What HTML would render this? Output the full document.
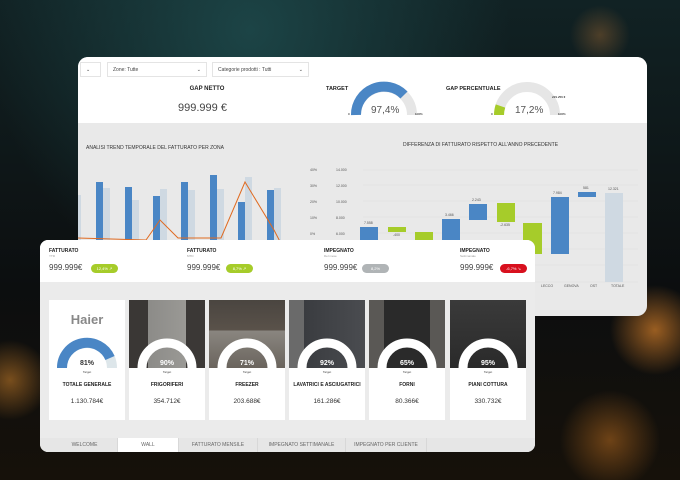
<!DOCTYPE html>
<html><head><meta charset="utf-8"><style>
*{margin:0;padding:0;box-sizing:border-box}
body{width:680px;height:480px;overflow:hidden;font-family:"Liberation Sans",sans-serif;position:relative;
background:radial-gradient(circle at 655px 330px,rgba(200,120,40,.75) 0,rgba(200,120,30,0) 45px),radial-gradient(circle at 610px 440px,rgba(170,100,30,.6) 0,rgba(200,120,30,0) 50px),radial-gradient(circle at 10px 380px,rgba(190,120,40,.6) 0,rgba(200,120,30,0) 40px),radial-gradient(circle at 600px 35px,rgba(150,100,50,.45) 0,rgba(0,0,0,0) 30px),radial-gradient(ellipse at 250px 30px,#1c4446 0,rgba(0,0,0,0) 260px),linear-gradient(#112224,#0c0e0f 60%,#16110a)}
.a{position:absolute}
.bp{left:78px;top:57px;width:569px;height:259px;border-radius:10px;background:#e9e9e9;overflow:hidden}
.top{left:0;top:0;width:569px;height:66px;background:#fff}
.dd{border:1px solid #e4e4e4;height:15px;font-size:5px;color:#444;padding:4px 5px;background:#fff}
.b{font-weight:bold;color:#222}
.fp{left:40px;top:240px;width:495px;height:212px;border-radius:8px;background:#ebebeb;overflow:hidden}
.card{top:60px;width:76px;height:120px;background:#fff}
.img{left:0;top:0;width:76px;height:68px}
.ct{width:76px;text-align:center;font-size:5px;font-weight:bold;color:#222;top:82px}
.cv{width:76px;text-align:center;font-size:6.5px;color:#333;top:98px}
.pc{width:76px;text-align:center;font-size:7px;font-weight:bold;color:#fff;top:60px}
.tg{width:76px;text-align:center;font-size:3px;color:#444;top:70px}
.tab{top:198px;height:14px;font-size:5px;color:#666;text-align:center;line-height:14px;border-right:1px solid #d8d8d8}
.badge{height:9px;border-radius:5px;font-size:4px;color:#fff;text-align:center;line-height:9px;width:27px}
</style></head><body>

<div class="a bp">
 <div class="a top"></div>
 <div class="a dd" style="left:2px;top:5px;width:21px">⌄</div>
 <div class="a dd" style="left:29px;top:5px;width:100px">Zone: Tutte<span style="float:right">⌄</span></div>
 <div class="a dd" style="left:134px;top:5px;width:97px">Categorie prodotti : Tutti<span style="float:right">⌄</span></div>
 <div class="a b" style="left:109px;top:29px;font-size:6px;width:40px;text-align:center">GAP NETTO</div>
 <div class="a" style="left:100px;top:45px;font-size:11px;color:#444">999.999 €</div>
 <div class="a b" style="left:248px;top:29px;font-size:5.5px">TARGET</div>
 <div class="a b" style="left:368px;top:29px;font-size:5.5px">GAP PERCENTUALE</div>
 <svg class="a" style="left:0;top:0" width="569" height="66">
  <path d="M278 58 A28 28 0 0 1 334 58" fill="none" stroke="#e6e6e6" stroke-width="10"/>
  <path d="M278 58 A28 28 0 0 1 326 38" fill="none" stroke="#4a86c5" stroke-width="10"/>
  <path d="M421 58 A28 28 0 0 1 477 58" fill="none" stroke="#e6e6e6" stroke-width="10"/>
  <path d="M421 58 A28 28 0 0 1 422.5 49" fill="none" stroke="#a6cc2a" stroke-width="10"/>
 </svg>
 <div class="a" style="left:293px;top:48px;font-size:10px;color:#555">97,4%</div>
 <div class="a" style="left:437px;top:48px;font-size:10px;color:#555">17,2%</div>
 <div class="a" style="left:270px;top:55px;font-size:3px">0</div>
 <div class="a" style="left:337px;top:55px;font-size:3px">100%</div>
 <div class="a" style="left:413px;top:55px;font-size:3px">0</div>
 <div class="a" style="left:480px;top:55px;font-size:3px">100%</div>
 <div class="a" style="left:474px;top:38px;font-size:3px">229.259 €</div>
 <div class="a" style="left:8px;top:88px;font-size:5px;color:#333">ANALISI TREND TEMPORALE DEL FATTURATO PER ZONA</div>
 <div class="a" style="left:325px;top:85px;font-size:5px;color:#333">DIFFERENZA DI FATTURATO RISPETTO ALL'ANNO PRECEDENTE</div>
 <svg class="a" style="left:0;top:0" width="569" height="259" font-family="Liberation Sans" font-size="3.5" fill="#555">
  <g stroke="#dcdcdc" stroke-width="0.5"><line x1="285" y1="113" x2="560" y2="113"/><line x1="285" y1="128" x2="560" y2="128"/><line x1="285" y1="144" x2="560" y2="144"/><line x1="285" y1="160" x2="560" y2="160"/><line x1="285" y1="176" x2="560" y2="176"/><line x1="285" y1="192" x2="560" y2="192"/><line x1="285" y1="208" x2="560" y2="208"/><line x1="285" y1="225" x2="560" y2="225"/></g>
  <g fill="#4a86c5"><rect x="18" y="125" width="7" height="80"/><rect x="47" y="130" width="7" height="80"/><rect x="75" y="139" width="7" height="80"/><rect x="103" y="125" width="7" height="80"/><rect x="132" y="118" width="7" height="80"/><rect x="160" y="145" width="7" height="80"/><rect x="189" y="133" width="7" height="80"/></g>
  <g fill="#cfd9e2"><rect x="0" y="138" width="3" height="80"/><rect x="25" y="131" width="7" height="80"/><rect x="54" y="143" width="7" height="80"/><rect x="82" y="132" width="7" height="80"/><rect x="110" y="133" width="7" height="80"/><rect x="139" y="132" width="7" height="80"/><rect x="167" y="120" width="7" height="80"/><rect x="196" y="131" width="7" height="80"/></g>
  <polyline points="0,181 68,183 82,163 100,181 143,181 167,125 196,173 210,200" fill="none" stroke="#e06a20" stroke-width="1"/>
  <text x="232" y="114">40%</text><text x="232" y="130">30%</text><text x="232" y="146">20%</text><text x="232" y="162">10%</text><text x="232" y="178">0%</text>
  <text x="258" y="114">14.000</text><text x="258" y="130">12.000</text><text x="258" y="146">10.000</text><text x="258" y="162">8.000</text><text x="258" y="178">6.000</text>
  <rect x="282" y="170" width="18" height="60" fill="#4a86c5"/><rect x="310" y="170" width="18" height="5" fill="#a6cc2a"/><rect x="337" y="175" width="18" height="40" fill="#a6cc2a"/><rect x="364" y="162" width="18" height="60" fill="#4a86c5"/><rect x="391" y="147" width="18" height="16" fill="#4a86c5"/><rect x="419" y="146" width="18" height="19" fill="#a6cc2a"/><rect x="445" y="166" width="19" height="31" fill="#a6cc2a"/><rect x="473" y="140" width="18" height="57" fill="#4a86c5"/><rect x="500" y="135" width="18" height="5" fill="#4a86c5"/><rect x="527" y="136" width="18" height="89" fill="#cfd9e2"/>
  <text x="286" y="167">7.558</text><text x="315" y="179">-400</text><text x="367" y="159">3.466</text><text x="394" y="144">2.243</text><text x="422" y="169">-2.635</text><text x="475" y="137">7.984</text><text x="505" y="132">581</text><text x="530" y="133">12.321</text>
  <text x="463" y="230">LECCO</text><text x="486" y="230">GENOVA</text><text x="512" y="230">OST</text><text x="533" y="230">TOTALE</text>
 </svg>
</div>

<div class="a fp">
 <div class="a" style="left:0;top:0;width:495px;height:42px;background:#fff"></div>
 <div class="a b" style="left:9px;top:8px;font-size:5px">FATTURATO</div><div class="a" style="left:9px;top:14px;font-size:3px;color:#999">YTD</div>
 <div class="a" style="left:9px;top:23px;font-size:8px;color:#444">999.999€</div><div class="a badge" style="left:51px;top:24px;background:#a6cc2a">12,4% ↗</div>
 <div class="a b" style="left:147px;top:8px;font-size:5px">FATTURATO</div><div class="a" style="left:147px;top:14px;font-size:3px;color:#999">MTD</div>
 <div class="a" style="left:147px;top:23px;font-size:8px;color:#444">999.999€</div><div class="a badge" style="left:186px;top:24px;background:#a6cc2a">8,7% ↗</div>
 <div class="a b" style="left:284px;top:8px;font-size:5px">IMPEGNATO</div><div class="a" style="left:284px;top:14px;font-size:3px;color:#999">Del mese</div>
 <div class="a" style="left:284px;top:23px;font-size:8px;color:#444">999.999€</div><div class="a badge" style="left:322px;top:24px;background:#b0b4b6">8,2%</div>
 <div class="a b" style="left:420px;top:8px;font-size:5px">IMPEGNATO</div><div class="a" style="left:420px;top:14px;font-size:3px;color:#999">Settimanale</div>
 <div class="a" style="left:420px;top:23px;font-size:8px;color:#444">999.999€</div><div class="a badge" style="left:460px;top:24px;background:#d8101e">-6,7% ↘</div>

 <div class="a card" style="left:9px">
  <div class="a" style="left:0;top:12px;width:76px;text-align:center;font-size:13px;font-weight:bold;color:#888">Haier</div>
  <svg class="a" style="left:0;top:0" width="76" height="70"><path d="M13 68 A25 25 0 0 1 63 68" fill="none" stroke="#dde6ea" stroke-width="10"/><path d="M13 68 A25 25 0 0 1 61 58" fill="none" stroke="#4a86c5" stroke-width="10"/></svg>
  <div class="pc a" style="color:#333">81%</div><div class="tg a">Target</div>
  <div class="ct a">TOTALE GENERALE</div><div class="cv a">1.130.784€</div>
 </div>
 <div class="a card" style="left:89px"><div class="a img" style="background:linear-gradient(90deg,#3a3735 0,#3a3735 25%,#8c8b88 25%,#9a9995 75%,#3b3836 75%)"></div>
  <svg class="a" style="left:0;top:0" width="76" height="70"><path d="M13 68 A25 25 0 0 1 63 68" fill="none" stroke="#fff" stroke-width="9"/></svg><div class="pc a">90%</div><div class="tg a">Target</div><div class="ct a">FRIGORIFERI</div><div class="cv a">354.712€</div></div>
 <div class="a card" style="left:169px"><div class="a img" style="background:linear-gradient(#4a4540 0,#5a524a 45%,#8a8680 45%,#6a645d)"></div>
  <svg class="a" style="left:0;top:0" width="76" height="70"><path d="M13 68 A25 25 0 0 1 63 68" fill="none" stroke="#fff" stroke-width="9"/></svg><div class="pc a">71%</div><div class="tg a">Target</div><div class="ct a">FREEZER</div><div class="cv a">203.688€</div></div>
 <div class="a card" style="left:249px"><div class="a img" style="background:linear-gradient(90deg,#6a6a6a 0,#6a6a6a 20%,#3a3c40 20%,#4a4c50)"></div>
  <svg class="a" style="left:0;top:0" width="76" height="70"><path d="M13 68 A25 25 0 0 1 63 68" fill="none" stroke="#fff" stroke-width="9"/></svg><div class="pc a">92%</div><div class="tg a">Target</div><div class="ct a">LAVATRICI E ASCIUGATRICI</div><div class="cv a">161.286€</div></div>
 <div class="a card" style="left:329px"><div class="a img" style="background:linear-gradient(90deg,#5a5855 0,#5a5855 20%,#2a2a2a 20%,#2a2a2a 80%,#5a5855 80%)"></div>
  <svg class="a" style="left:0;top:0" width="76" height="70"><path d="M13 68 A25 25 0 0 1 63 68" fill="none" stroke="#fff" stroke-width="9"/></svg><div class="pc a">65%</div><div class="tg a">Target</div><div class="ct a">FORNI</div><div class="cv a">80.366€</div></div>
 <div class="a card" style="left:410px"><div class="a img" style="background:linear-gradient(#3a3a3a,#2a2a2a)"></div>
  <svg class="a" style="left:0;top:0" width="76" height="70"><path d="M13 68 A25 25 0 0 1 63 68" fill="none" stroke="#fff" stroke-width="9"/></svg><div class="pc a">95%</div><div class="tg a">Target</div><div class="ct a">PIANI COTTURA</div><div class="cv a">330.732€</div></div>

 <div class="a" style="left:0;top:198px;width:495px;height:14px;background:#e6e6e6"></div>
 <div class="a tab" style="left:12px;width:66px">WELCOME</div>
 <div class="a tab" style="left:78px;width:61px;background:#fff">WALL</div>
 <div class="a tab" style="left:139px;width:79px">FATTURATO MENSILE</div>
 <div class="a tab" style="left:218px;width:88px">IMPEGNATO SETTIMANALE</div>
 <div class="a tab" style="left:306px;width:81px">IMPEGNATO PER CLIENTE</div>
</div>
</body></html>
